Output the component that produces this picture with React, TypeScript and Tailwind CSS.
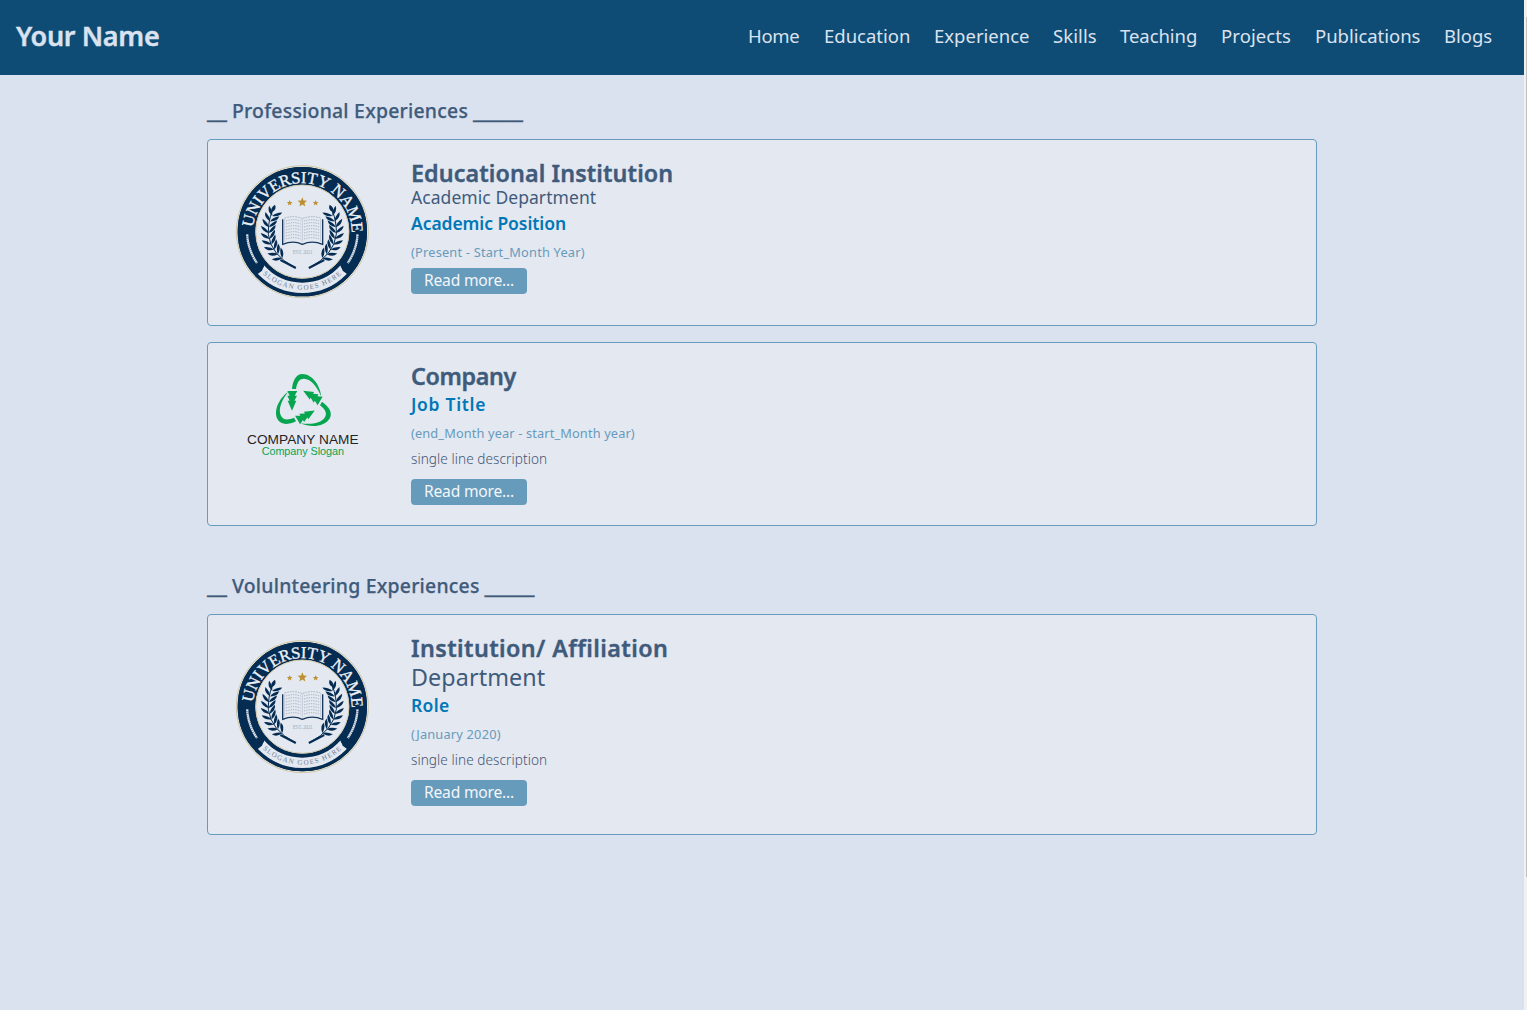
import type { ReactNode } from "react";

const NAV = [
  { label: "Home", cls: "w-[52px] tracking-[-0.3px]" },
  { label: "Education", cls: "w-[86px] tracking-[0px]" },
  { label: "Experience", cls: "w-[95px] tracking-[0px]" },
  { label: "Skills", cls: "w-[43px] tracking-[0.1px]" },
  { label: "Teaching", cls: "w-[77px] tracking-[-0.05px]" },
  { label: "Projects", cls: "w-[70px] tracking-[0.1px]" },
  { label: "Publications", cls: "w-[105px] tracking-[-0.03px]" },
  { label: "Blogs", cls: "w-[49px] tracking-[0px]" },
];

const LEAVES = [207, 197, 187, 177, 167, 157, 147, 137, 127];

function Laurel() {
  return (
    <g fill="#052c52">
      <path
        d="M127 168 Q114 198 115 238 Q122 300 196 338"
        fill="none"
        stroke="#052c52"
        strokeWidth="3"
      />
      <path d="M152 312 L199 336 L196 342 L150 318Z" />
      {LEAVES.map((deg) => {
        const a = (deg * Math.PI) / 180;
        const x = 217 + 101 * Math.cos(a);
        const y = 228 + 101 * Math.sin(a);
        return (
          <g key={deg} transform={`translate(${x} ${y}) rotate(${deg + 180})`}>
            <path d="M0 1 Q4 -13 22 -22 Q21 -5 0 1Z" />
            <path d="M0 1 Q-4 -13 -22 -22 Q-21 -5 0 1Z" />
          </g>
        );
      })}
      <path d="M124 172 Q121 157 135 149 Q142 165 124 172Z" />
    </g>
  );
}

function Star({ x, y, r }: { x: number; y: number; r: number }) {
  const pts = Array.from({ length: 10 }, (_, i) => {
    const a = (i * Math.PI) / 5 - Math.PI / 2;
    const q = i % 2 ? r * 0.45 : r;
    return `${x + q * Math.cos(a)},${y + q * Math.sin(a)}`;
  }).join(" ");
  return <polygon points={pts} fill="#bd9131" />;
}

function UniversitySeal({ id }: { id: string }) {
  return (
    <svg viewBox="0 0 438 450" className="mt-[15px] ml-[22px] h-[150px] w-[146px] shrink-0">
      <defs>
        <path id={`${id}-top`} d="M69.5 220 A148 148 0 0 1 364.5 220" />
        <path id={`${id}-bottom`} d="M79.9 337.1 A174 174 0 0 0 354.1 337.1" />
      </defs>
      <circle cx="217" cy="230" r="198" fill="#e9e7dc" stroke="#c9c09e" strokeWidth="2.5" />
      <circle cx="217" cy="230" r="167" fill="none" stroke="#052c52" strokeWidth="54" />
      <circle cx="217" cy="230" r="140" fill="#e4e9f1" stroke="#cfc7a8" strokeWidth="3" />
      <path
        d="M102 331 A153 153 0 0 0 332 331 L338 347 L356 361 A191 191 0 0 1 78 361 L96 347Z"
        fill="#e4e9f1"
      />
      <path d="M103.5 376 A185 185 0 0 0 330.5 376" fill="none" />
      <path d="M82 322 Q92 315 103 326 Q104 338 92 344 Q76 340 82 322Z" fill="#052c52" />
      <path d="M352 322 Q342 315 331 326 Q330 338 342 344 Q358 340 352 322Z" fill="#052c52" />
      <circle cx="217" cy="230" r="189" fill="none" stroke="#052c52" strokeWidth="10" />
      <path
        d="M51.5 238 A165 165 0 0 0 81 324 M382.5 238 A165 165 0 0 1 353 324"
        fill="none"
        stroke="#dfe5ee"
        strokeWidth="7"
        strokeDasharray="5 1"
      />
      <text fontFamily="Liberation Serif" fontSize="50" fill="#eef1f6" stroke="#eef1f6" strokeWidth="1">
        <textPath href={`#${id}-top`} startOffset="2" textLength="452" lengthAdjust="spacing">
          UNIVERSITY NAME
        </textPath>
      </text>
      <text fontFamily="Liberation Serif" fontSize="21" fill="#6b7a90">
        <textPath href={`#${id}-bottom`} startOffset="27" textLength="260" lengthAdjust="spacing">
          SLOGAN GOES HERE
        </textPath>
      </text>
      <Star x={217} y={142} r={15} />
      <Star x={179} y={144} r={9} />
      <Star x={257} y={144} r={9} />
      <g fill="none" stroke="#4a5d78" strokeWidth="2">
        <path d="M164 189 Q192 180 217 191 Q245 180 272 189" stroke="#8895a8" strokeDasharray="5 3" />
        <path
          d="M168 198 Q192 190 212 198 M168 207 Q192 199 212 207 M168 216 Q192 208 212 216 M168 225 Q192 217 212 225 M168 234 Q192 226 212 234 M168 243 Q192 235 212 243 M168 252 Q192 244 212 252 M222 198 Q245 190 268 198 M222 207 Q245 199 268 207 M222 216 Q245 208 268 216 M222 225 Q245 217 268 225 M222 234 Q245 226 268 234 M222 243 Q245 235 268 243 M222 252 Q245 244 268 252"
          stroke="#8793a6"
          strokeDasharray="4 3"
        />
        <path d="M164 190 V260 M217 191 V262 M272 190 V260" stroke="#b4bdcb" />
        <path d="M158 193 V268 Q190 255 217 268 Q246 255 278 268 V193" stroke="#15385c" strokeWidth="4" />
      </g>
      <text x="188" y="297" fontFamily="Liberation Serif" fontSize="16" fill="#a3adbb" textLength="60">
        EST. 2021
      </text>
      <Laurel />
      <g transform="translate(434 0) scale(-1 1)">
        <Laurel />
      </g>
    </svg>
  );
}

function CompanyLogo() {
  return (
    <svg viewBox="0 0 405 300" className="mt-[22px] ml-[28px] mr-[5px] h-[100px] w-[135px] shrink-0">
      <g fill="#06a651">
        {[0, 120, 240].map((deg) => (
          <g key={deg} transform={`rotate(${deg} 202 117)`}>
            <path d="M168 72 C170 46 181 27 199 27 C228 27 252 60 256 95 C244 66 226 42 204 41 C188 41 183 54 180 72Z" />
            <path d="M154 78 H184 L176 92 H183 L175 107 H181 L168 137 L155 107 H161 L154 92 H161Z" />
          </g>
        ))}
      </g>
      <text x="33" y="238" fontFamily="Liberation Sans" fontSize="41" fill="#242424" textLength="335">
        COMPANY NAME
      </text>
      <text x="77" y="269" fontFamily="Liberation Sans" fontSize="32.5" fill="#06a651" textLength="247">
        Company Slogan
      </text>
    </svg>
  );
}

function SectionHeading({ children, cls }: { children: ReactNode; cls: string }) {
  return (
    <h2 className="mb-[9px] flex h-[39px] items-baseline text-[19.4px] leading-[39px] font-medium whitespace-nowrap text-[#3f5b7b] [-webkit-text-stroke:0.25px]">
      <span className="w-[25px] text-[23px] leading-none">__</span>
      <span className={cls}>{children}</span>
      <span className="text-[23px] leading-none">_____</span>
    </h2>
  );
}

function Card({ logo, cls, children }: { logo: ReactNode; cls: string; children: ReactNode }) {
  return (
    <article className={`flex items-start rounded-[4px] border border-[#669bbc] bg-[#e4e8f1] ${cls}`}>
      {logo}
      <div className="flex flex-col items-start pt-5 pl-[35px] whitespace-nowrap">{children}</div>
    </article>
  );
}

function Title({ children, cls }: { children: ReactNode; cls: string }) {
  return (
    <h3
      className={`text-[23.3px] leading-[26px] font-semibold text-[#3f5b7b] [-webkit-text-stroke:0.4px] ${cls}`}
    >
      {children}
    </h3>
  );
}

function Role({ children, cls }: { children: ReactNode; cls: string }) {
  return <p className={`text-[17.5px] font-semibold text-[#0077b6] ${cls}`}>{children}</p>;
}

function Period({ children, cls }: { children: ReactNode; cls: string }) {
  return <p className={`text-[12.8px] leading-[28px] text-[#669bbc] ${cls}`}>{children}</p>;
}

function Description() {
  return (
    <p className="text-[13.6px] leading-[24px] font-light tracking-[0.07px] text-[#3f5472]">
      single line description
    </p>
  );
}

function ReadMore({ cls }: { cls: string }) {
  return (
    <button
      className={`h-[26px] w-[116px] rounded-[4px] bg-[#669bbc] pb-0.5 text-[15.6px] leading-[24px] tracking-[-0.2px] text-[#f3f6fa] ${cls}`}
    >
      Read more...
    </button>
  );
}

export default function App() {
  return (
    <div className="flex h-[1010px] overflow-hidden bg-[#dbe2ef] font-['Noto_Sans',sans-serif]">
      <div className="flex-1">
        <header className="flex h-[75px] items-center justify-between bg-[#0f4c75] pr-[31px] pl-4 text-[#dbe2ef]">
          <h1 className="pb-[3px] text-[27px] leading-[40px] font-semibold tracking-[-0.35px] [-webkit-text-stroke:0.4px]">
            Your Name
          </h1>
          <nav className="flex gap-6 pb-[3px] text-[18.5px] leading-[28px]">
            {NAV.map((n) => (
              <a key={n.label} className={`whitespace-nowrap ${n.cls}`}>
                {n.label}
              </a>
            ))}
          </nav>
        </header>
        <main className="mx-auto w-[1110px] pt-4">
          <SectionHeading cls="w-[241px] tracking-[0.24px]">Professional Experiences</SectionHeading>
          <Card logo={<UniversitySeal id="seal-a" />} cls="h-[187px]">
            <Title cls="tracking-[0.1px]">Educational Institution</Title>
            <p className="text-[17.5px] leading-[22px] tracking-[0.06px] text-[#3f5b7b]">Academic Department</p>
            <Role cls="leading-[30px] tracking-[-0.07px]">Academic Position</Role>
            <Period cls="tracking-[0.2px]">(Present - Start_Month Year)</Period>
            <ReadMore cls="mt-0.5" />
          </Card>
          <Card logo={<CompanyLogo />} cls="mt-4 h-[184px]">
            <Title cls="tracking-[-0.35px]">Company</Title>
            <Role cls="leading-[30px] tracking-[0.7px]">Job Title</Role>
            <Period cls="tracking-[0.13px]">(end_Month year - start_Month year)</Period>
            <Description />
            <ReadMore cls="mt-2" />
          </Card>
          <div className="pt-10">
            <SectionHeading cls="w-[252.5px] tracking-[0.23px]">Volulnteering Experiences</SectionHeading>
          </div>
          <Card logo={<UniversitySeal id="seal-b" />} cls="h-[221px]">
            <Title cls="tracking-[0.4px]">Institution/ Affiliation</Title>
            <p className="text-[23.3px] leading-[32px] tracking-[0.1px] text-[#3f5b7b]">Department</p>
            <Role cls="leading-[24px] tracking-[0.3px]">Role</Role>
            <Period cls="mt-[3px] tracking-[0.2px]">(January 2020)</Period>
            <Description />
            <ReadMore cls="mt-2" />
          </Card>
        </main>
      </div>
      <div className="flex w-[3px] justify-end bg-[#f1f1f1] pt-[17px]">
        <div className="h-[860px] w-px bg-[#c1c1c1]" />
      </div>
    </div>
  );
}
